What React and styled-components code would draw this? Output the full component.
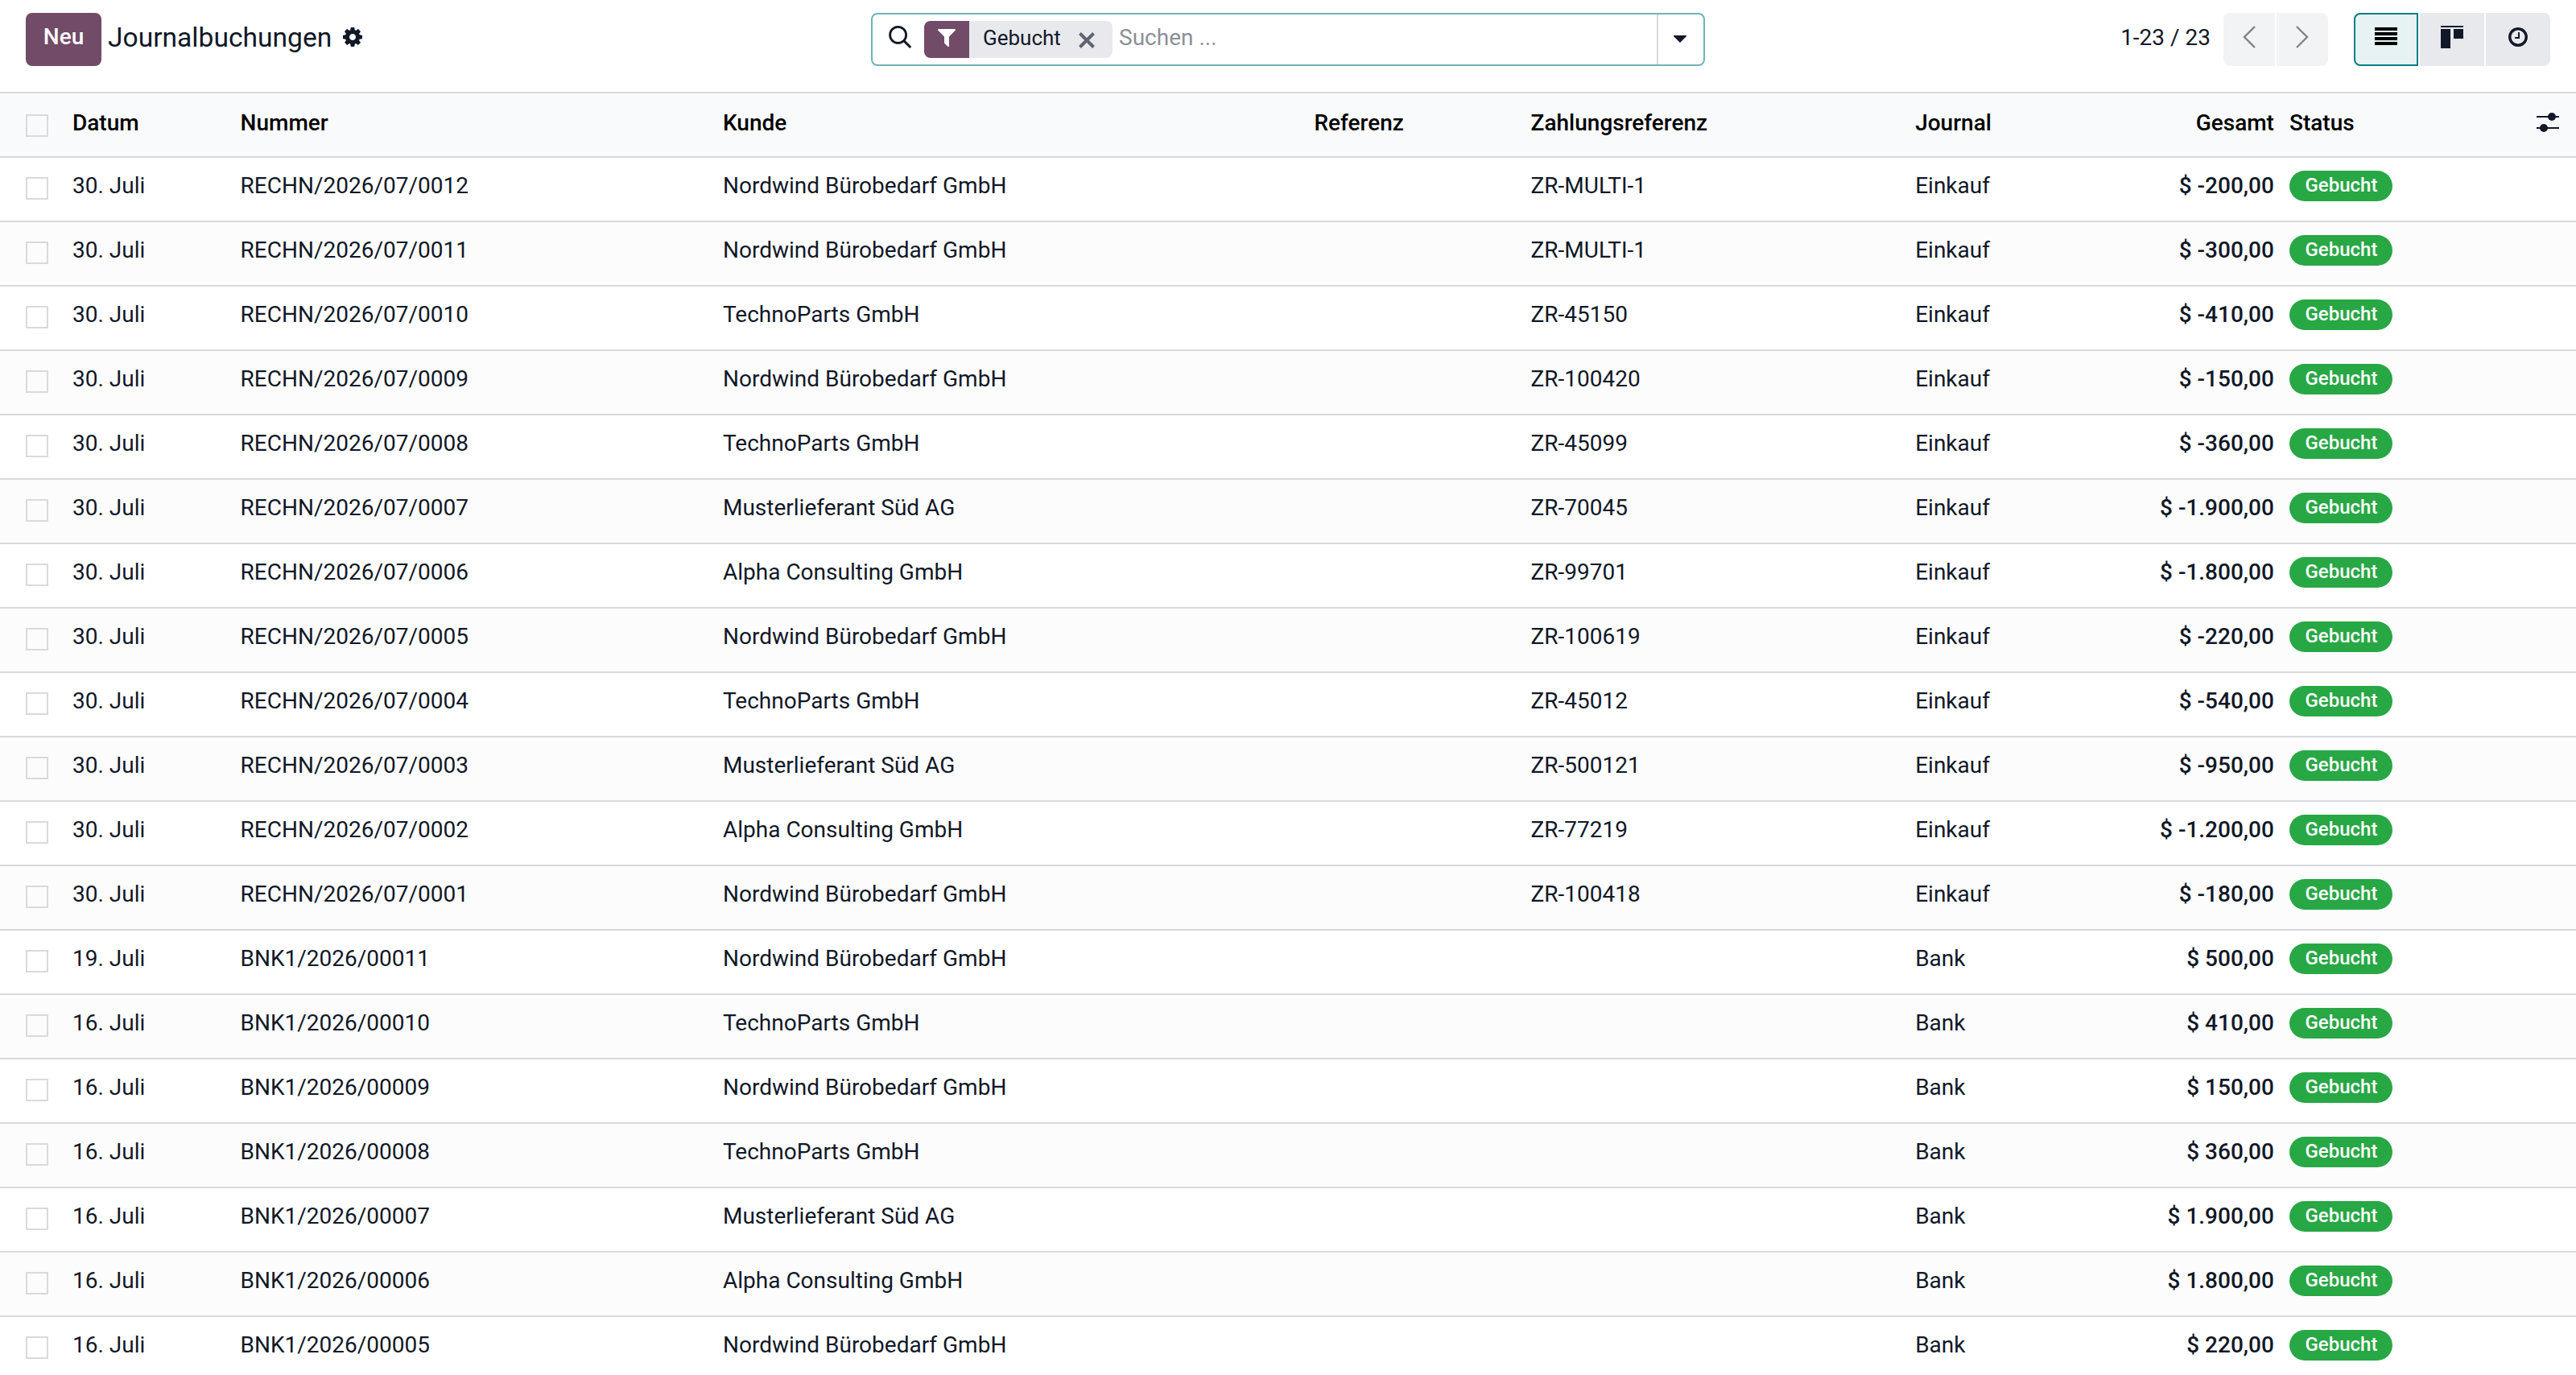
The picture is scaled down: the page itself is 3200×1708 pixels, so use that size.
import React from 'react';
import styled, { createGlobalStyle } from 'styled-components';

const GlobalStyle = createGlobalStyle`
  * {
    box-sizing: border-box;
  }

  body {
    margin: 0;
    background: #fff;
    color: #111827;
    font-family: Roboto, 'Liberation Sans', sans-serif;
    font-size: 28px;
    line-height: 42px;
    overflow: hidden;
  }
`;

const Page = styled.div`
  width: 3200px;
  height: 1708px;
  overflow: hidden;
`;

const ControlPanel = styled.header`
  display: grid;
  grid-template-columns: 1050px 1036px 1fr;
  height: 114px;
  padding: 16px 32px 32px;
`;

const Breadcrumb = styled.div`
  display: flex;
  height: 66px;
`;

const NewButton = styled.button`
  width: 94px;
  height: 66px;
  padding: 0 0 6px;
  border: 0;
  border-radius: 8px;
  background: #714b67;
  color: #fff;
  font: inherit;
  font-weight: 500;
`;

const Title = styled.h1`
  margin: 0 12px 0 8px;
  padding-top: 10px;
  font-size: 33.6px;
  font-weight: 400;
`;

const Icon = styled.svg`
  display: block;
  flex: none;
  width: ${({ $width }) => $width || 28}px;
  height: ${({ $height }) => $height || 28}px;
  fill: currentColor;
`;

const GearButton = styled.span`
  padding-top: 16px;
`;

const SearchBox = styled.div`
  display: flex;
  height: 66px;
  border: 2px solid #71b3b6;
  border-radius: 8px;
`;

const SearchIcon = styled.span`
  padding: 14px 16px 0 20px;
`;

const Facet = styled.div`
  display: flex;
  height: 46px;
  margin-top: 8px;
  border-radius: 8px;
  background: #e7e9ed;
  overflow: hidden;
`;

const FacetIcon = styled.span`
  width: 56px;
  padding: 6px 14px;
  background: #714b67;
  color: #fff;
`;

const FacetLabel = styled.span`
  width: 136px;
  padding-left: 17px;
  font-size: 26px;
  line-height: 42px;
`;

const FacetRemove = styled.span`
  padding: 14px 22px 0 0;
  color: #5f636f;
`;

const Placeholder = styled.span`
  flex: 1;
  padding: 8px 0 0 8px;
  color: #8b8f99;
`;

const SearchToggle = styled.span`
  width: 58px;
  padding: 26px 0 0 19px;
  border-left: 2px solid #d8dadd;
`;

const PanelRight = styled.div`
  display: flex;
  justify-content: flex-end;
`;

const PagerText = styled.span`
  padding: 10px 16px 0 0;
`;

const ButtonGroup = styled.div`
  display: flex;
  gap: 2px;
  height: 66px;
  margin-right: ${({ $gap }) => $gap || 0}px;

  > :first-child {
    border-radius: 8px 0 0 8px;
  }

  > :last-child {
    border-radius: 0 8px 8px 0;
  }
`;

const PagerButton = styled.span`
  display: flex;
  justify-content: center;
  width: 64px;
  padding-top: 16px;
  background: #f2f3f5;
  color: #818388;
`;

const ViewButton = styled.span`
  display: flex;
  justify-content: center;
  width: 80px;
  padding-top: ${({ $active }) => ($active ? 14 : 16)}px;
  border: ${({ $active }) => ($active ? '2px solid #017e84' : '0')};
  background: ${({ $active }) => ($active ? '#e6f2f3' : '#e7e9ed')};
  color: ${({ $active }) => ($active ? '#000' : '#111827')};
`;

const Row = styled.div`
  display: grid;
  grid-template-columns: 90px 208.6px 599.4px 734.4px 269.2px 477.6px 199.8px 246px 1fr 82px;
  height: 80px;
  padding-top: 14px;
  border-bottom: 2px solid #d8dadd;
  background: ${({ $striped }) => ($striped ? '#fcfcfc' : '#fff')};
`;

const HeaderRow = styled(Row)`
  height: 82px;
  padding-top: 16px;
  border-top: 2px solid #d8dadd;
  background: #f9fafb;
  color: #000;
  font-weight: 500;
`;

const Cell = styled.div`
  white-space: nowrap;
`;

const AmountCell = styled(Cell)`
  text-align: right;
  font-weight: 500;
`;

const StatusCell = styled(Cell)`
  padding-left: 19px;
`;

const OptionsCell = styled(Cell)`
  padding: 6px 0 0 33px;
  color: #111827;
`;

const Checkbox = styled.span`
  display: block;
  width: 28px;
  height: 28px;
  margin: 10px 0 0 32px;
  border: 2px solid #d8dadd;
  background: transparent;
`;

const Badge = styled.span`
  display: block;
  width: 128px;
  height: 38px;
  margin-top: 2px;
  padding-left: 1px;
  border-radius: 19px;
  background: #28a745;
  color: #fff;
  font-size: 24px;
  font-weight: 500;
  line-height: 36px;
  text-align: center;
`;

const NORDWIND = 'Nordwind Bürobedarf GmbH';
const TECHNO = 'TechnoParts GmbH';
const MUSTER = 'Musterlieferant Süd AG';
const ALPHA = 'Alpha Consulting GmbH';

const entries = [
  ['30. Juli', 'RECHN/2026/07/0012', NORDWIND, 'ZR-MULTI-1', 'Einkauf', '-200,00'],
  ['30. Juli', 'RECHN/2026/07/0011', NORDWIND, 'ZR-MULTI-1', 'Einkauf', '-300,00'],
  ['30. Juli', 'RECHN/2026/07/0010', TECHNO, 'ZR-45150', 'Einkauf', '-410,00'],
  ['30. Juli', 'RECHN/2026/07/0009', NORDWIND, 'ZR-100420', 'Einkauf', '-150,00'],
  ['30. Juli', 'RECHN/2026/07/0008', TECHNO, 'ZR-45099', 'Einkauf', '-360,00'],
  ['30. Juli', 'RECHN/2026/07/0007', MUSTER, 'ZR-70045', 'Einkauf', '-1.900,00'],
  ['30. Juli', 'RECHN/2026/07/0006', ALPHA, 'ZR-99701', 'Einkauf', '-1.800,00'],
  ['30. Juli', 'RECHN/2026/07/0005', NORDWIND, 'ZR-100619', 'Einkauf', '-220,00'],
  ['30. Juli', 'RECHN/2026/07/0004', TECHNO, 'ZR-45012', 'Einkauf', '-540,00'],
  ['30. Juli', 'RECHN/2026/07/0003', MUSTER, 'ZR-500121', 'Einkauf', '-950,00'],
  ['30. Juli', 'RECHN/2026/07/0002', ALPHA, 'ZR-77219', 'Einkauf', '-1.200,00'],
  ['30. Juli', 'RECHN/2026/07/0001', NORDWIND, 'ZR-100418', 'Einkauf', '-180,00'],
  ['19. Juli', 'BNK1/2026/00011', NORDWIND, '', 'Bank', '500,00'],
  ['16. Juli', 'BNK1/2026/00010', TECHNO, '', 'Bank', '410,00'],
  ['16. Juli', 'BNK1/2026/00009', NORDWIND, '', 'Bank', '150,00'],
  ['16. Juli', 'BNK1/2026/00008', TECHNO, '', 'Bank', '360,00'],
  ['16. Juli', 'BNK1/2026/00007', MUSTER, '', 'Bank', '1.900,00'],
  ['16. Juli', 'BNK1/2026/00006', ALPHA, '', 'Bank', '1.800,00'],
  ['16. Juli', 'BNK1/2026/00005', NORDWIND, '', 'Bank', '220,00'],
];

const GearIcon = () => (
  <Icon viewBox="0 0 1792 1792">
    <path d="M1152 896q0-106-75-181t-181-75-181 75-75 181 75 181 181 75 181-75 75-181zm512-109v222q0 12-8 23t-20 13l-185 28q-19 54-39 91 35 50 107 138 10 12 10 25t-9 23q-27 37-99 108t-94 71q-12 0-26-9l-138-108q-44 23-91 38-16 136-29 186-7 28-36 28h-222q-14 0-24.5-8.5t-11.5-21.5l-28-184q-49-16-90-37l-141 107q-10 9-25 9-14 0-25-11-126-114-165-168-7-10-7-23 0-12 8-23 15-21 51-66.5t54-70.5q-27-50-41-99l-183-27q-13-2-21-12.5t-8-23.5v-222q0-12 8-23t19-13l186-28q14-46 39-92-40-57-107-138-10-12-10-24 0-10 9-23 26-36 98.5-107.5t94.5-71.5q13 0 26 10l138 107q44-23 91-38 16-136 29-186 7-28 36-28h222q14 0 24.5 8.5t11.5 21.5l28 184q49 16 90 37l142-107q9-9 24-9 13 0 25 10 129 119 165 170 7 8 7 22 0 12-8 23-15 21-51 66.5t-54 70.5q26 50 41 98l183 28q13 2 21 12.5t8 23.5z" />
  </Icon>
);

const FilterIcon = () => (
  <Icon viewBox="0 0 1792 1792">
    <path d="M1595 295q17 41-14 70l-493 493v742q0 42-39 59-13 5-25 5-27 0-45-19l-256-256q-19-19-19-45v-486l-493-493q-31-29-14-70 17-39 59-39h1280q42 0 59 39z" />
  </Icon>
);

const ClockIcon = () => (
  <Icon viewBox="0 0 1792 1792">
    <path d="M1024 544v448q0 14-9 23t-23 9h-320q-14 0-23-9t-9-23v-64q0-14 9-23t23-9h224v-352q0-14 9-23t23-9h64q14 0 23 9t9 23zm416 352q0-148-73-273t-198-198-273-73-273 73-198 198-73 273 73 273 198 198 273 73 273-73 198-198 73-273zm224 0q0 209-103 385.5t-279.5 279.5-385.5 103-385.5-103-279.5-279.5-103-385.5 103-385.5 279.5-279.5 385.5-103 385.5 103 279.5 279.5 103 385.5z" />
  </Icon>
);

const MagnifierIcon = () => (
  <Icon viewBox="0 0 28 28">
    <circle cx="11.6" cy="11.4" r="10" fill="none" stroke="currentColor" strokeWidth="2.8" />
    <path d="M18.6 18.4L27.2 27" stroke="currentColor" strokeWidth="3" />
  </Icon>
);

const CloseIcon = () => (
  <Icon viewBox="0 0 20 20" $width={20} $height={20}>
    <path d="M1.5 1.5L18.5 18.5M18.5 1.5L1.5 18.5" stroke="currentColor" strokeWidth="4" />
  </Icon>
);

const CaretIcon = () => (
  <Icon viewBox="0 0 16 9" $width={16} $height={9}>
    <path d="M0 0H16V1L8 9L0 1Z" />
  </Icon>
);

const ChevronIcon = ({ flip }) => (
  <Icon viewBox="0 0 28 28">
    <path
      d={flip ? 'M7 1L20 14L7 27' : 'M21 1L8 14L21 27'}
      fill="none"
      stroke="currentColor"
      strokeWidth="2.4"
    />
  </Icon>
);

const ListIcon = () => (
  <Icon viewBox="0 0 28 28">
    <path d="M0 2H28V6H0ZM0 8H28V12H0ZM0 14H28V18H0ZM0 20H28V24H0Z" />
  </Icon>
);

const KanbanIcon = () => (
  <Icon viewBox="0 0 28 28">
    <path d="M0 0H28V2H0ZM0 4H12V28H0ZM16 4H28V16H16Z" />
  </Icon>
);

const SlidersIcon = () => (
  <Icon viewBox="0 0 28 28">
    <path d="M0 6H28V8H0ZM0 20H28V22H0Z" />
    <circle cx="19" cy="7" r="5" />
    <circle cx="9" cy="21" r="5" />
  </Icon>
);

const ControlBar = () => (
  <ControlPanel>
    <Breadcrumb>
      <NewButton>Neu</NewButton>
      <Title>Journalbuchungen</Title>
      <GearButton>
        <GearIcon />
      </GearButton>
    </Breadcrumb>
    <SearchBox>
      <SearchIcon>
        <MagnifierIcon />
      </SearchIcon>
      <Facet>
        <FacetIcon>
          <FilterIcon />
        </FacetIcon>
        <FacetLabel>Gebucht</FacetLabel>
        <FacetRemove>
          <CloseIcon />
        </FacetRemove>
      </Facet>
      <Placeholder>Suchen ...</Placeholder>
      <SearchToggle>
        <CaretIcon />
      </SearchToggle>
    </SearchBox>
    <PanelRight>
      <PagerText>1-23 / 23</PagerText>
      <ButtonGroup $gap={32}>
        <PagerButton>
          <ChevronIcon />
        </PagerButton>
        <PagerButton>
          <ChevronIcon flip />
        </PagerButton>
      </ButtonGroup>
      <ButtonGroup>
        <ViewButton $active>
          <ListIcon />
        </ViewButton>
        <ViewButton>
          <KanbanIcon />
        </ViewButton>
        <ViewButton>
          <ClockIcon />
        </ViewButton>
      </ButtonGroup>
    </PanelRight>
  </ControlPanel>
);

const App = () => (
  <Page>
    <GlobalStyle />
    <ControlBar />
    <HeaderRow>
      <Checkbox />
      <Cell>Datum</Cell>
      <Cell>Nummer</Cell>
      <Cell>Kunde</Cell>
      <Cell>Referenz</Cell>
      <Cell>Zahlungsreferenz</Cell>
      <Cell>Journal</Cell>
      <AmountCell>Gesamt</AmountCell>
      <StatusCell>Status</StatusCell>
      <OptionsCell>
        <SlidersIcon />
      </OptionsCell>
    </HeaderRow>
    {entries.map(([date, number, partner, payment, journal, total], index) => (
      <Row key={number} $striped={index % 2 === 1}>
        <Checkbox />
        <Cell>{date}</Cell>
        <Cell>{number}</Cell>
        <Cell>{partner}</Cell>
        <Cell />
        <Cell>{payment}</Cell>
        <Cell>{journal}</Cell>
        <AmountCell>{`$ ${total}`}</AmountCell>
        <StatusCell>
          <Badge>Gebucht</Badge>
        </StatusCell>
      </Row>
    ))}
  </Page>
);

export default App;
